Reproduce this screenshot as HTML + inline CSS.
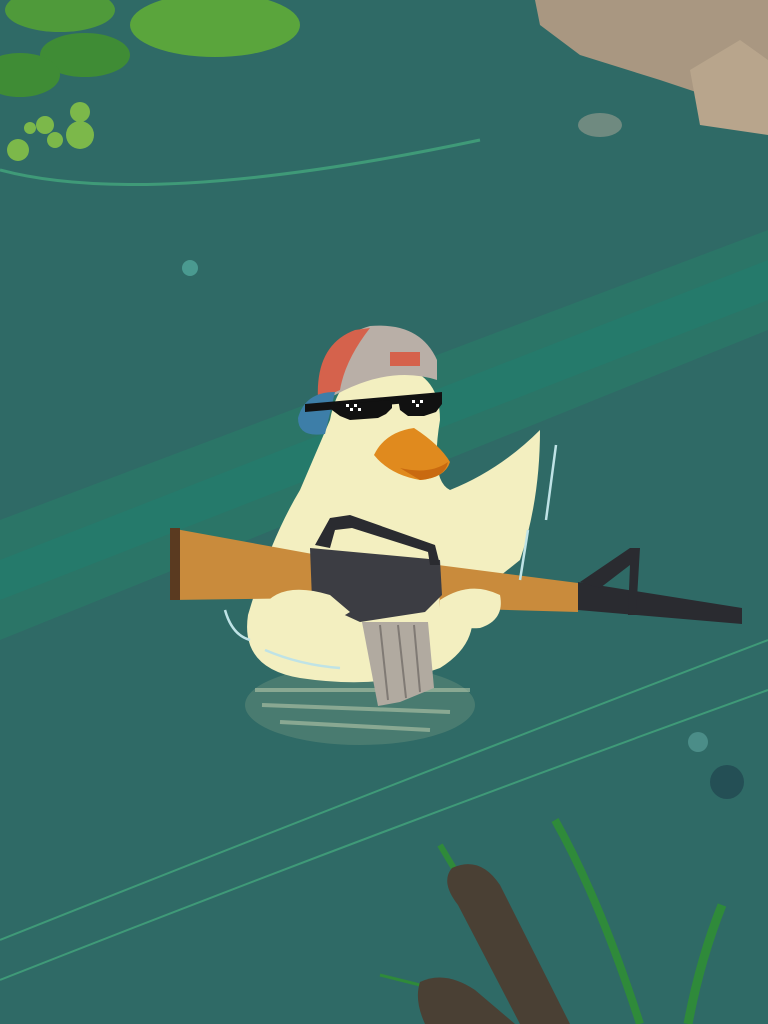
<!DOCTYPE html>
<html><head><meta charset="utf-8"><style>html,body{margin:0;padding:0;background:#2f6a66}svg{display:block}</style></head>
<body>
<svg width="768" height="1024" viewBox="0 0 768 1024" xmlns="http://www.w3.org/2000/svg">
<rect width="768" height="1024" fill="#2f6a66"/>
<path d="M0 520 L768 230 L768 330 L0 640 Z" fill="#2a7868" opacity="0.8"/>
<path d="M0 560 L768 260 L768 300 L0 600 Z" fill="#1f8070" opacity="0.5"/>
<path d="M0 170 Q150 210 480 140" stroke="#3f9a78" stroke-width="3" fill="none"/>
<path d="M0 940 Q350 800 768 640" stroke="#3f9a78" stroke-width="2" fill="none"/>
<path d="M0 980 Q380 830 768 690" stroke="#3f9a78" stroke-width="2" fill="none"/>
<ellipse cx="60" cy="10" rx="55" ry="22" fill="#4f9a3a"/>
<ellipse cx="215" cy="25" rx="85" ry="32" fill="#5aa53c"/>
<ellipse cx="85" cy="55" rx="45" ry="22" fill="#3f8c35"/>
<ellipse cx="20" cy="75" rx="40" ry="22" fill="#3f8c35"/>
<g fill="#7cb84a"><circle cx="18" cy="150" r="11"/><circle cx="45" cy="125" r="9"/><circle cx="80" cy="135" r="14"/><circle cx="80" cy="112" r="10"/><circle cx="55" cy="140" r="8"/><circle cx="30" cy="128" r="6"/></g>
<path d="M535 0 L768 0 L768 110 L720 100 L660 80 L580 55 L540 25 Z" fill="#a99781"/>
<path d="M690 70 L740 40 L768 60 L768 135 L700 125 Z" fill="#b8a58c"/>
<ellipse cx="600" cy="125" rx="22" ry="12" fill="#6f8a80"/>
<circle cx="190" cy="268" r="8" fill="#4a9a90"/>
<circle cx="698" cy="742" r="10" fill="#4b8d88"/>
<circle cx="727" cy="782" r="17" fill="#244f55"/>
<ellipse cx="360" cy="705" rx="115" ry="40" fill="#6a907c" opacity="0.45"/>
<path d="M255 690 L470 690 M262 705 L450 712 M280 722 L430 730" stroke="#c9d6b4" stroke-width="4" opacity="0.5"/>
<path d="M248 615 Q240 668 300 678 Q380 690 440 668 Q482 642 470 600 L520 560 Q540 500 540 430 Q500 470 450 490 Q430 480 440 420 Q440 370 390 365 Q340 365 330 420 L300 490 Q270 540 248 615 Z" fill="#f3efc0"/>
<path d="M318 400 Q320 340 370 326 Q420 322 437 360 L437 380 Q390 365 335 395 Z" fill="#b9afa7"/>
<path d="M318 400 Q315 345 355 330 L370 328 Q345 360 340 390 Z" fill="#d5624c"/>
<path d="M390 352 L420 352 L420 366 L390 366 Z" fill="#d5624c"/>
<path d="M298 418 Q305 392 335 392 L325 434 Q298 438 298 418 Z" fill="#3d7ea8"/>
<!-- sunglasses -->
<path d="M305 404 L442 392 L442 400 L305 412 Z" fill="#111"/>
<path d="M330 405 L392 400 L392 408 L386 414 L378 418 L350 420 L340 416 L332 410 Z" fill="#111"/>
<path d="M398 399 L442 395 L442 404 L436 412 L424 416 L408 416 L400 410 Z" fill="#111"/>
<g fill="#fff"><rect x="346" y="404" width="3" height="3"/><rect x="350" y="408" width="3" height="3"/><rect x="354" y="404" width="3" height="3"/><rect x="358" y="408" width="3" height="3"/><rect x="412" y="400" width="3" height="3"/><rect x="416" y="404" width="3" height="3"/><rect x="420" y="400" width="3" height="3"/></g>
<path d="M374 455 Q385 432 414 428 Q440 445 450 462 Q445 478 420 480 Q390 475 374 455 Z" fill="#e08a1e"/>
<path d="M400 468 Q430 475 448 462 Q445 478 420 480 Z" fill="#c96a10"/>
<path d="M362 622 L428 622 L434 688 L400 702 L378 706 Z" fill="#b1aaa0"/>
<path d="M380 625 L388 700 M398 625 L406 698 M414 625 L420 692" stroke="#807a74" stroke-width="2"/>
<path d="M170 528 L318 555 L315 598 L170 600 Z" fill="#c98b3c"/>
<path d="M170 528 L180 528 L180 600 L170 600 Z" fill="#5a3a20"/>
<path d="M438 565 L578 583 L578 612 L440 608 Z" fill="#c98b3c"/>
<!-- receiver -->
<path d="M310 548 L440 560 L442 595 L425 612 L360 622 L312 600 Z" fill="#3c3d43"/>
<path d="M315 545 L330 518 L350 515 L435 545 L440 565 L430 565 L428 552 L352 528 L335 530 L330 548 Z" fill="#2a2b30"/>
<path d="M578 582 L742 608 L742 624 L578 610 Z" fill="#2a2b30"/>
<path d="M580 582 L630 548 L640 548 L636 615 L628 615 L630 565 L600 588 Z" fill="#2a2b30"/>
<path d="M262 608 Q280 580 330 595 L350 612 Q330 625 310 622 Q290 645 268 630 Z" fill="#f3efc0"/>
<path d="M440 600 Q470 580 500 595 Q505 620 480 628 Q455 630 440 618 Z" fill="#f3efc0"/>
<path d="M556 445 L546 520 M528 530 L520 580 M225 610 Q232 635 250 640 M265 650 Q300 665 340 668" stroke="#bfe3e6" stroke-width="2.5" fill="none"/>
<path d="M555 820 Q600 900 640 1024" stroke="#2f8a3a" stroke-width="8" fill="none"/>
<path d="M722 905 Q700 960 688 1024" stroke="#2f8a3a" stroke-width="9" fill="none"/>
<path d="M440 845 L455 870" stroke="#2f8a3a" stroke-width="6"/>
<path d="M452 868 Q480 855 500 885 L570 1024 L520 1024 L458 905 Q440 882 452 868 Z" fill="#4a4034"/>
<path d="M380 975 L420 985" stroke="#2f8a3a" stroke-width="3"/>
<path d="M420 982 Q445 970 475 990 L515 1024 L425 1024 Q414 1000 420 982 Z" fill="#4a4034"/>
</svg>
</body></html>
